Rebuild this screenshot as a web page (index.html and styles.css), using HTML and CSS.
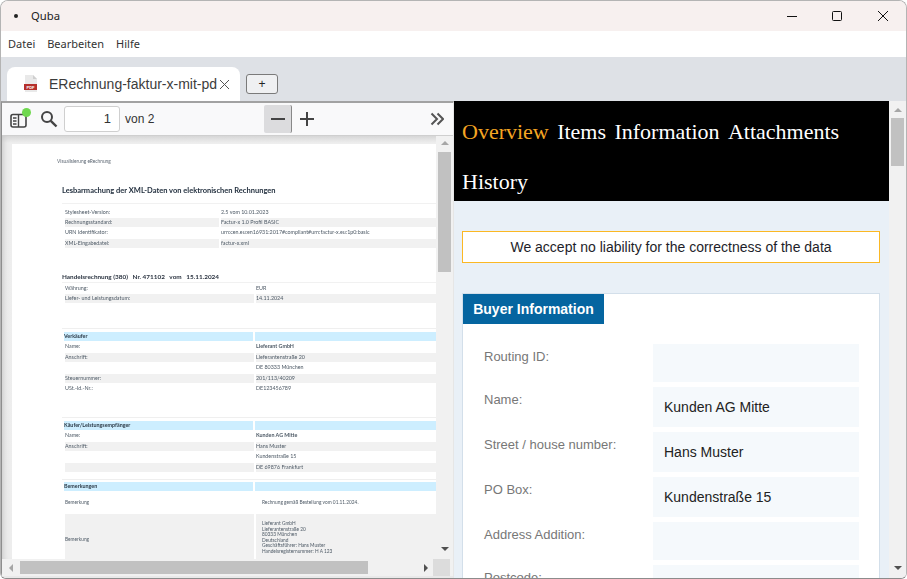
FILE: index.html
```html
<!DOCTYPE html>
<html lang="de">
<head>
<meta charset="utf-8">
<title>Quba</title>
<link rel="stylesheet" href="styles.css">
</head>
<body>
<div class="window">
  <header class="titlebar">
    <span class="appdot"></span>
    <span class="apptitle">Quba</span>
    <div class="winctl">
      <span class="ctl"><svg width="12" height="12" viewBox="0 0 12 12"><path d="M1 6.5h10" stroke="#111" fill="none"/></svg></span>
      <span class="ctl"><svg width="12" height="12" viewBox="0 0 12 12"><rect x="1.5" y="1.5" width="9" height="9" rx="1" stroke="#111" fill="none"/></svg></span>
      <span class="ctl"><svg width="12" height="12" viewBox="0 0 12 12"><path d="M1 1l10 10M11 1L1 11" stroke="#111" fill="none"/></svg></span>
    </div>
  </header>
  <nav class="menubar"><span>Datei</span><span>Bearbeiten</span><span>Hilfe</span></nav>
  <div class="tabbar">
    <div class="tab">
      <svg class="pdficon" width="14" height="18" viewBox="0 0 14 18"><path d="M1 0h8l4 4v13H1z" fill="#e9e9e9"/><path d="M9 0l4 4H9z" fill="#cfcfcf"/><rect x="0" y="9" width="13" height="6" fill="#b5302c"/><text x="6.5" y="14" class="pdflabel">PDF</text></svg>
      <span class="tabname">ERechnung-faktur-x-mit-pd</span>
      <svg class="tabclose" width="11" height="11" viewBox="0 0 11 11"><path d="M1 1l9 9M10 1l-9 9" stroke="#555" fill="none"/></svg>
    </div>
    <button class="addtab">+</button>
  </div>
  <main class="panes">
    <section class="left">
      <div class="toolbar">
        <span class="sideicon">
          <svg width="17" height="15" viewBox="0 0 17 15"><rect x="1" y="1.5" width="15" height="12.5" rx="2" fill="none" stroke="#444" stroke-width="1.6"/><path d="M8.5 2v12" stroke="#444" stroke-width="1.4"/><path d="M3 5h3.500M3 8h3.500M3 11h3.500" stroke="#444" stroke-width="1.300"/></svg>
          <span class="greendot"></span>
        </span>
        <svg class="searchicon" width="18" height="18" viewBox="0 0 18 18"><circle cx="7" cy="7" r="5" fill="none" stroke="#444" stroke-width="2"/><path d="M10.800 10.800L16.500 16.500" stroke="#444" stroke-width="2.400"/></svg>
        <span class="pageinput">1</span>
        <span class="pagecount">von 2</span>
        <span class="zoomout"><svg width="14" height="14" viewBox="0 0 14 14"><path d="M0 7h14" stroke="#444" stroke-width="2"/></svg></span>
        <span class="zoomin"><svg width="14" height="14" viewBox="0 0 14 14"><path d="M0 7h14M7 0v14" stroke="#444" stroke-width="2"/></svg></span>
        <svg class="moreicon" width="14" height="14" viewBox="0 0 14 14"><path d="M1.500 1.500L7 7l-5.500 5.500M7.500 1.500L13 7l-5.500 5.500" fill="none" stroke="#555" stroke-width="2"/></svg>
      </div>
      <div class="viewer">
        <div class="viewrow">
          <div class="pagearea">
            <div class="page">
              <div class="docmark">Visualisierung eRechnung</div>
              <div class="doctitle">Lesbarmachung der XML-Daten von elektronischen Rechnungen</div>
              <div class="rows meta">
                <div class="row"><span>Stylesheet-Version:</span><span>2.5 vom 10.01.2023</span></div>
                <div class="row alt"><span>Rechnungsstandard:</span><span>Factur-x 1.0 Profil BASIC</span></div>
                <div class="row"><span>URN Identifikator:</span><span>urn:cen.eu:en16931:2017#compliant#urn:factur-x.eu:1p0:basic</span></div>
                <div class="row alt wide"><span>XML-Eingabedatei:</span><span>factur-x.xml</span></div>
              </div>
              <div class="dochead">Handelsrechnung (380) &nbsp; Nr. 471102 &nbsp; vom &nbsp; 15.11.2024</div>
              <div class="rows after">
                <div class="row"><span>Währung:</span><span>EUR</span></div>
                <div class="row alt"><span>Liefer- und Leistungsdatum:</span><span>14.11.2024</span></div>
              </div>
              <div class="rule seller"></div>
              <div class="rows">
                <div class="row band"><span>Verkäufer</span><span></span></div>
                <div class="row"><span>Name:</span><span class="strong">Lieferant GmbH</span></div>
                <div class="row alt"><span>Anschrift:</span><span>Lieferantenstraße 20</span></div>
                <div class="row"><span></span><span>DE 80333 München</span></div>
                <div class="row alt wide"><span>Steuernummer:</span><span>201/113/40209</span></div>
                <div class="row"><span>USt.-Id.-Nr.:</span><span>DE123456789</span></div>
              </div>
              <div class="rule buyer"></div>
              <div class="rows">
                <div class="row band"><span>Käufer/Leistungsempfänger</span><span></span></div>
                <div class="row"><span>Name:</span><span class="strong">Kunden AG Mitte</span></div>
                <div class="row alt"><span>Anschrift:</span><span>Hans Muster</span></div>
                <div class="row"><span></span><span>Kundenstraße 15</span></div>
                <div class="row alt wide"><span></span><span>DE 69876 Frankfurt</span></div>
              </div>
              <div class="rule notes"></div>
              <div class="rows">
                <div class="row band"><span>Bemerkungen</span><span></span></div>
                <div class="row note"><span>Bemerkung</span><span class="notetext">Rechnung gemäß Bestellung vom 01.11.2024.</span></div>
                <div class="row note alt tall"><span>Bemerkung</span><span class="notetext">Lieferant GmbH<br>Lieferantenstraße 20<br>80333 München<br>Deutschland<br>Geschäftsführer: Hans Muster<br>Handelsregisternummer: H A 123</span></div>
              </div>
            </div>
          </div>
          <div class="vscroll">
            <span class="tri up off"></span>
            <span class="pdfthumb"></span>
            <span class="tri down"></span>
          </div>
        </div>
        <div class="hscroll">
          <span class="tri lft off"></span>
          <span class="hthumb"></span>
          <span class="tri rgt"></span>
          <span class="corner"></span>
        </div>
      </div>
    </section>
    <section class="right">
      <div class="doc">
        <nav class="topnav">
          <span class="current">Overview</span><span>Items</span><span>Information</span><span>Attachments</span><span>History</span>
        </nav>
        <div class="content">
          <p class="notice">We accept no liability for the correctness of the data</p>
          <div class="card">
            <h2 class="cardhead">Buyer Information</h2>
            <div class="fields">
              <div class="label">Routing ID:</div><div class="value"></div>
              <div class="label">Name:</div><div class="value">Kunden AG Mitte</div>
              <div class="label">Street / house number:</div><div class="value">Hans Muster</div>
              <div class="label">PO Box:</div><div class="value">Kundenstraße 15</div>
              <div class="label">Address Addition:</div><div class="value"></div>
              <div class="label">Postcode:</div><div class="value"></div>
            </div>
          </div>
        </div>
      </div>
      <div class="mainscroll">
        <span class="tri up off"></span>
        <span class="mainthumb"></span>
        <span class="tri down"></span>
      </div>
    </section>
  </main>
</div>
</body>
</html>
```
FILE: styles.css
```css
* { box-sizing: border-box; }
html, body { margin: 0; padding: 0; height: 100%; overflow: hidden; background: #fff; }
.window {
  width: 907px; height: 579px; display: flex; flex-direction: column;
  border: 1px solid #b4b4b4; border-bottom-color: #8c8c8c; border-radius: 8px 8px 6px 6px; overflow: hidden;
  font-family: "Noto Sans", "Open Sans", sans-serif; background: #fff;
}
.titlebar { height: 30px; flex: none; background: #f7f0ef; display: flex; align-items: center; font-size: 11.250px; color: #222; }
.appdot { width: 4px; height: 4px; border-radius: 50%; background: #222; margin: -1px 0 0 13px; }
.apptitle { margin-left: 13px; margin-top: -1px; }
.winctl { margin-left: auto; display: flex; padding-right: 1px; }
.ctl { width: 45px; height: 30px; display: flex; align-items: center; justify-content: center; }
.ctl:nth-child(2) { margin-right: 1px; }
.menubar { height: 26px; flex: none; background: #fff; display: flex; align-items: center; font-size: 11px; color: #333; padding: 0 0 2px 7px; gap: 12px; }
.tabbar { height: 44px; flex: none; background: #dee1e6; display: flex; align-items: flex-start; padding: 10px 0 0 6px; }
.tab { width: 233px; height: 34px; background: #fff; border-radius: 8px 8px 0 0; display: flex; align-items: center; padding-left: 17px; overflow: hidden; }
.pdficon { flex: none; }
.pdflabel { font: bold 4px "Liberation Sans", sans-serif; fill: #fff; text-anchor: middle; }
.tabname { font: 14px "Liberation Sans", Arial, sans-serif; color: #3c3c3c; margin-left: 11px; width: 168px; white-space: nowrap; overflow: hidden; }
.tabclose { margin-left: 2px; flex: none; }
.addtab { margin: 7px 0 0 6px; width: 32px; height: 20px; padding: 0; background: #eff0f2; border: 1px solid #7a7a7a; border-radius: 3px; font: 12px/16px "Liberation Sans", sans-serif; color: #222; }
.panes { flex: 1; display: flex; min-height: 0; }

.left { width: 453px; flex: none; display: flex; flex-direction: column; border-top: 2px solid #a2a2a2; border-left: 1px solid #8e8e8e; border-right: 1px solid #e6e6e6; background: #e9e9e9; }
.toolbar { height: 33px; flex: none; background: #f9f9fa; border-bottom: 1px solid #cfcfcf; display: flex; align-items: center; position: relative; font: 12px "Liberation Sans", sans-serif; color: #333; }
.sideicon { margin-left: 8px; position: relative; display: flex; margin-top: 2px; }
.greendot { position: absolute; right: -4px; top: -5px; width: 9px; height: 9px; border-radius: 50%; background: #6fd84f; }
.searchicon { margin-left: 13px; }
.pageinput { margin-left: 6px; width: 56px; height: 26px; background: #fff; border: 1px solid #cfcfcf; border-radius: 3px; text-align: right; padding-right: 8px; font-size: 13px; line-height: 24px; }
.pagecount { margin-left: 5px; }
.zoomout { margin-left: 110px; width: 28px; height: 28px; background: #dcdcde; border-radius: 2px; display: flex; align-items: center; justify-content: center; border-right: 1px solid #888; }
.zoomin { margin-left: 8px; display: flex; }
.moreicon { margin-left: auto; margin-right: 9px; }

.viewer { flex: 1; min-height: 0; display: flex; flex-direction: column; }
.viewrow { height: 423px; flex: none; display: flex; }
.pagearea { width: 434px; flex: none; padding: 8px 0 0 10px; overflow: hidden; background: linear-gradient(#d8d8d8, #eeeeee 7px, #ededed); box-shadow: inset 6px 0 6px -5px #c4c4c4; }
.page { background: #fff; width: 424px; height: 415px; padding-left: 45px; overflow: hidden; font-family: Lato, "Open Sans", sans-serif; color: #4e5a66; font-size: 5.350px; filter: blur(.4px); }
.docmark { margin-top: 13px; height: 8px; line-height: 8px; font-size: 4.800px; color: #5c6672; }
.doctitle { margin: 21px 0 0 5px; height: 18px; line-height: 10px; font-size: 7.500px; font-weight: 700; color: #23303f; border-bottom: 1px solid #f1f1f1; white-space: nowrap; }
.dochead { margin: 24px 0 0 5px; height: 11px; line-height: 10px; font-size: 6.400px; font-weight: 700; color: #2a3340; border-bottom: 1px solid #f1f1f1; white-space: nowrap; }
.rows { margin-left: 8px; }
.meta { margin-top: 4px; --c1: 154px; }
.after { margin-top: 1px; }
.row { display: grid; grid-template-columns: var(--c1, 189px) 1fr; column-gap: 2px; height: 9px; margin-top: 1px; line-height: 9px; white-space: nowrap; }
.row > span { padding-left: 0; overflow: hidden; }
.alt > span { background: #f1f1f1; }
.wide { margin-top: 2px; }
.band { height: 9px; margin-top: 0; font-weight: 700; color: #2b3946; margin-left: -1px; }
.band > span { background: #cdeeff; }
.band + .row { margin-top: 1px; height: 10px; }
.rule { height: 1px; margin-left: 5px; background: #efefef; }
.seller { margin-top: 25px; margin-bottom: 3px; }
.buyer { margin-top: 24px; margin-bottom: 3px; }
.notes { margin-top: 7px; margin-bottom: 2px; }
.strong { font-weight: 700; }
.note { align-items: stretch; font-size: 4.800px; height: 23px !important; line-height: 23px; margin-top: 0 !important; }
.tall { height: 51px !important; line-height: 51px; }
.tall > span { display: flex; align-items: center; }
.notetext { padding-left: 6px !important; }
.tall .notetext { display: block; line-height: 5.500px; padding-top: 7px; }

.tri { width: 0; height: 0; display: block; border-style: solid; border-color: transparent; flex: none; }
.up { border-width: 0 4.500px 4.500px; border-bottom-color: #a6a6a6; }
.down { border-width: 4.500px 4.500px 0; border-top-color: #505050; }
.lft { border-width: 4.500px 4.500px 4.500px 0; border-right-color: #a6a6a6; }
.rgt { border-width: 4.500px 0 4.500px 4.500px; border-left-color: #505050; }

.vscroll { width: 17px; flex: none; background: #f1f1f1; display: flex; flex-direction: column; align-items: center; padding-top: 5px; }
.pdfthumb { width: 13px; height: 120px; background: #c1c1c1; margin: 6.500px 0 275px; flex: none; }
.hscroll { height: 17px; flex: none; background: #f1f1f1; display: flex; align-items: center; padding-left: 7px; }
.hthumb { width: 348px; height: 13px; background: #c1c1c1; margin-left: 6.500px; }
.rgt { margin-left: 56px; }
.corner { width: 17px; height: 17px; background: #dcdcdc; margin-left: 5.500px; }

.right { flex: 1; min-width: 0; display: flex; }
.doc { width: 435px; flex: none; overflow: hidden; background: #e9f0f7; }
.topnav { background: #000; height: 100px; padding: 6px 8px 0; display: flex; flex-wrap: wrap; column-gap: 8.400px; align-content: flex-start; font: 22px/50px "Liberation Serif", "Times New Roman", serif; color: #fff; }
.current { color: #f5a623; }
.content { padding: 30px 9px 0 8px; }
.notice { margin: 0; height: 32px; background: #fff; border: 1px solid #fbb824; text-align: center; font: 14px/30px "Liberation Sans", Arial, sans-serif; color: #1e1e2a; }
.card { margin-top: 30px; background: #fff; border: 1px solid #d3dfea; height: 400px; font-family: "Liberation Sans", Arial, sans-serif; }
.cardhead { margin: 0; width: 141px; height: 30px; background: #0565a0; color: #fff; font-size: 14px; line-height: 30px; text-align: center; font-weight: 700; }
.fields { margin: 20px 20px 0 21px; display: grid; grid-template-columns: 169px 206px; row-gap: 5px; }
.label { font-size: 13px; color: #777; line-height: 16px; padding-top: 5px; }
.value { min-height: 38px; background: #f5f9fc; padding: 0 10px 0 11px; font-size: 14px; line-height: 40px; color: #222; }

.mainscroll { width: 17px; flex: none; background: #f1f1f1; display: flex; flex-direction: column; align-items: center; padding-top: 7px; }
.mainthumb { width: 13px; height: 48px; background: #c1c1c1; margin: 6px 0 400px; flex: none; }
```
